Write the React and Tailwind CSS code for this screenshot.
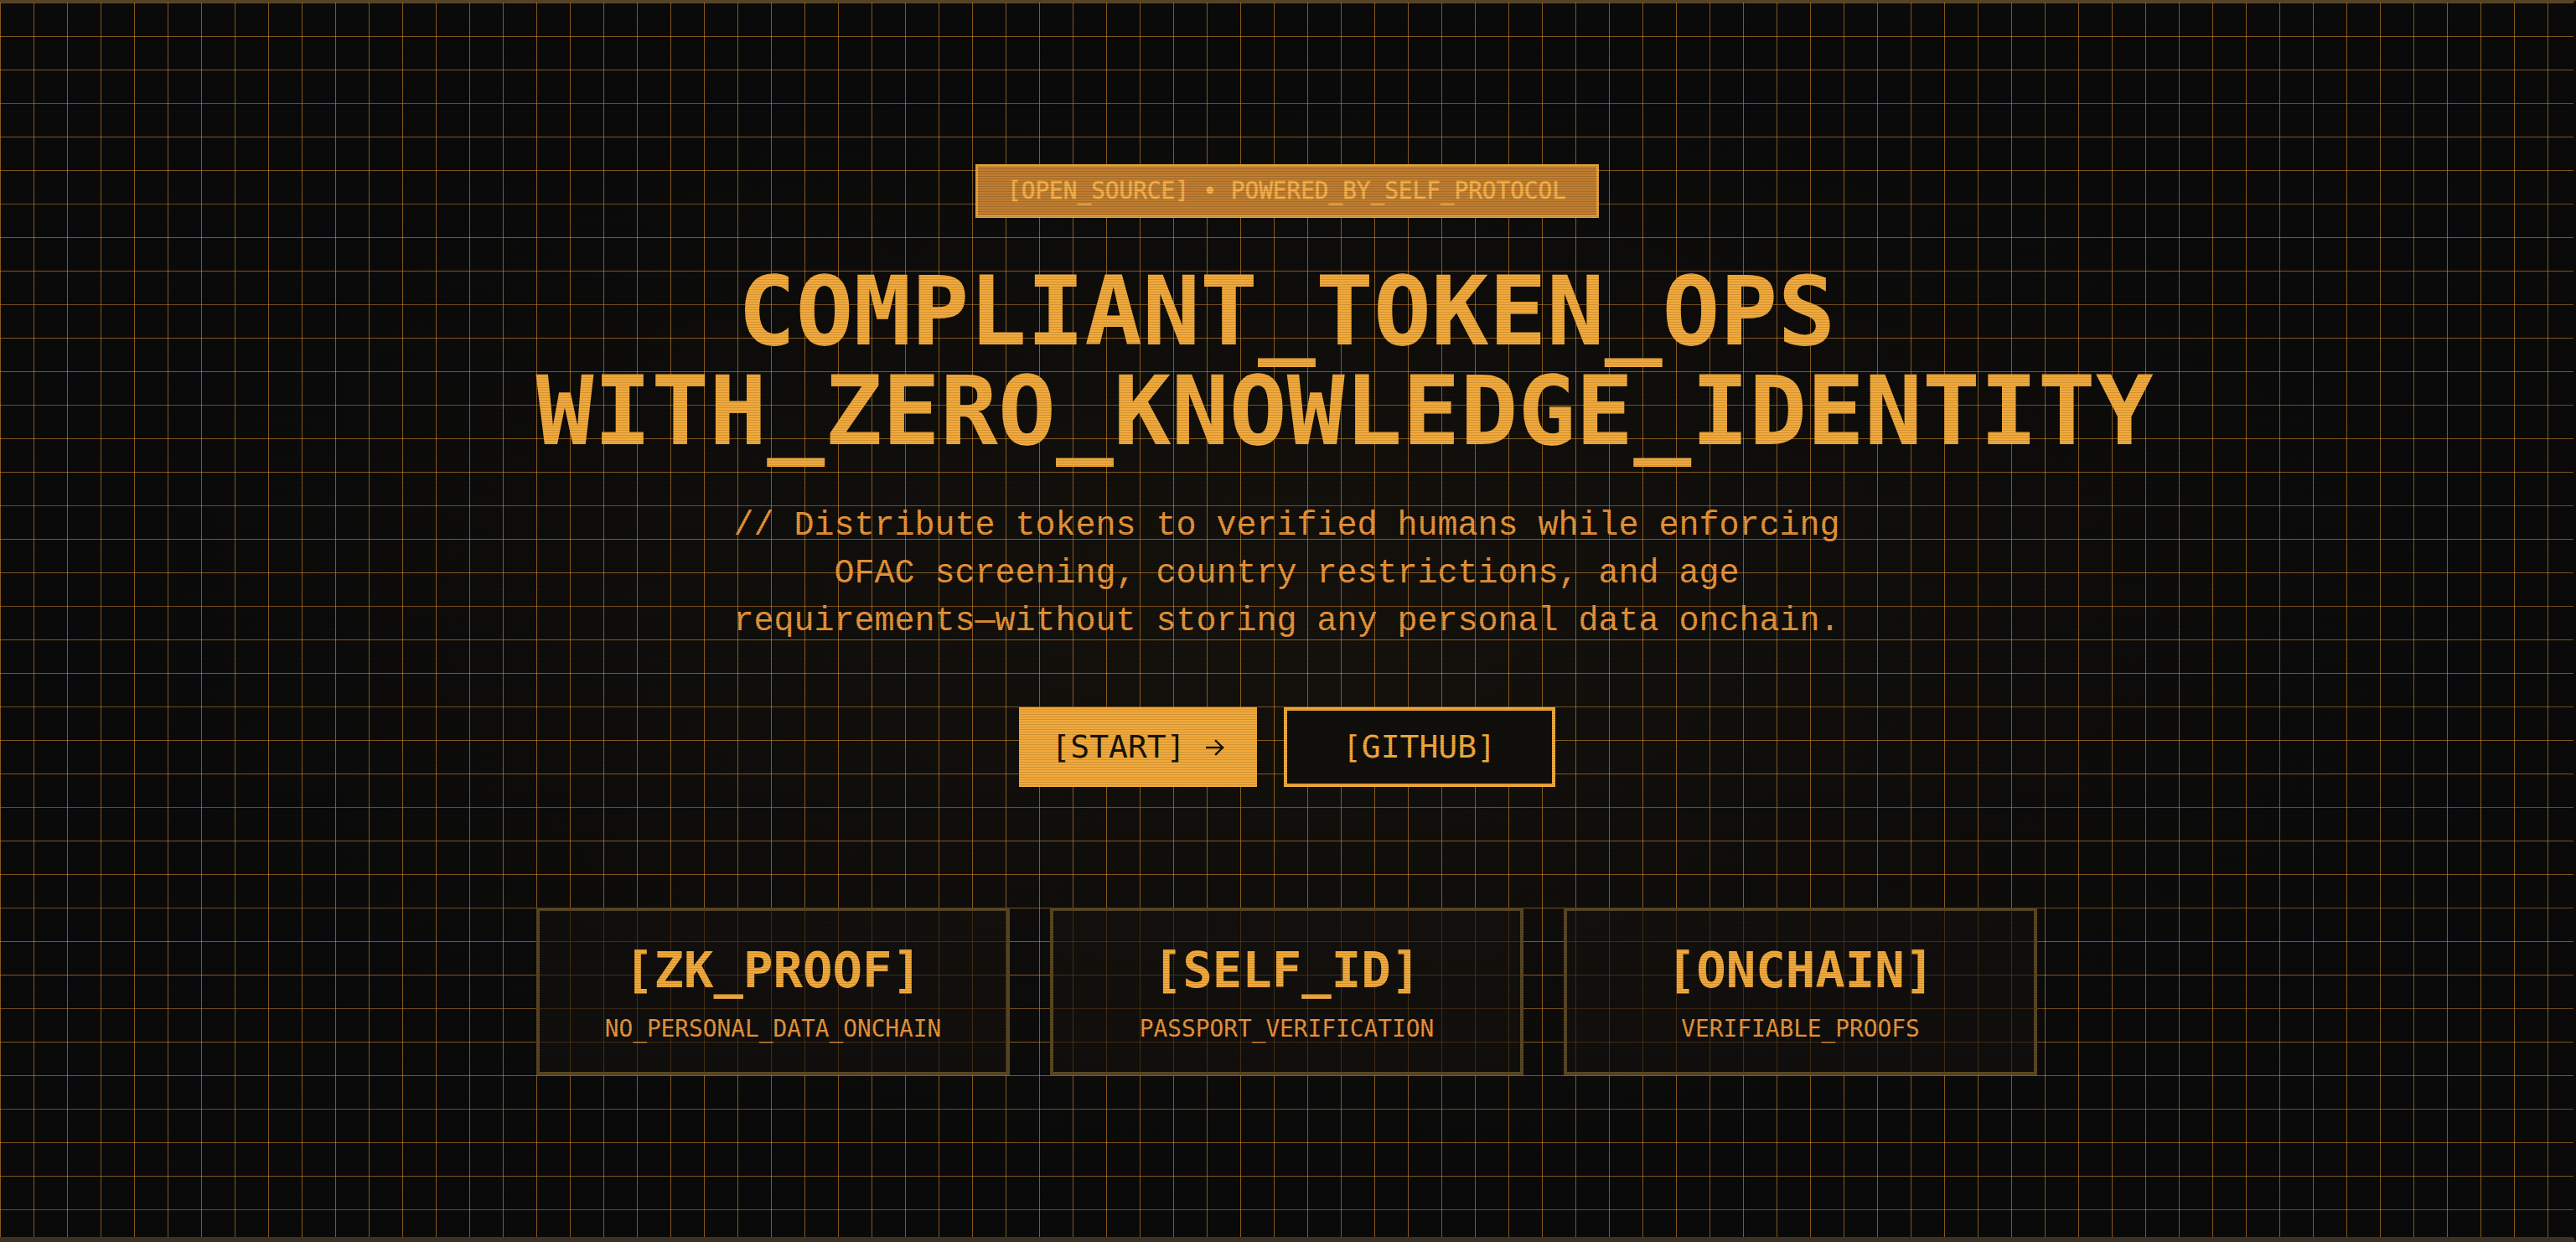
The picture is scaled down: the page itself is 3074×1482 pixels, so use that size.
import React from "react";

const MONO = "font-['DejaVu_Sans_Mono','Liberation_Mono',monospace]";

function Card({ title, sub }) {
  return (
    <div className="flex h-[200px] w-[565px] flex-col items-center border-4 border-[#5a4723] bg-[#16130f]/60 pt-[41px]">
      <div className={`${MONO} text-[59px] font-bold leading-[59px] text-[#f2aa3c]`}>{title}</div>
      <div className={`${MONO} mt-[27px] text-[27.8px] leading-[28px] text-[#e8953a]`}>{sub}</div>
    </div>
  );
}

export default function App() {
  return (
    <div className="relative h-screen w-full overflow-hidden border-t-[3px] border-b-[6px] border-r-[3px] border-t-[#52432a] border-b-[#3a3222] border-r-[#0a0a0a] bg-[#0a0a0a] bg-[linear-gradient(to_right,rgba(242,160,50,0.55)_1px,transparent_1px),linear-gradient(to_bottom,rgba(242,160,50,0.5)_1px,transparent_1px),radial-gradient(ellipse_at_center,rgba(242,170,60,0.05),transparent_65%)] bg-[size:40px_40px,40px_40px,100%_100%]">
      <div className="relative z-0 flex flex-col items-center pt-[193px]">
        <div className={`${MONO} flex h-[64px] w-[744px] items-center justify-center whitespace-nowrap border-[3px] border-[#e8a33c] bg-[#bf7d30] text-[27.7px] text-[#f6b24a] [-webkit-text-stroke:0.5px_#f6b24a]`}>
          [OPEN_SOURCE] • POWERED_BY_SELF_PROTOCOL
        </div>

        <h1 className={`${MONO} mt-[52px] w-[1792px] text-center text-[114.5px] font-bold leading-[119px] text-[#f2aa3c]`}>
          <div className="whitespace-nowrap">COMPLIANT_TOKEN_OPS</div>
          <div>WITH_ZERO_KNOWLEDGE_IDENTITY</div>
        </h1>

        <p className="mt-[49px] w-[1360px] text-center font-['Liberation_Mono',monospace] text-[40px] leading-[57px] text-[#e8953a]">
          // Distribute tokens to verified humans while enforcing OFAC screening, country restrictions, and age requirements—without storing any personal data onchain.
        </p>

        <div className="mt-[74px] flex gap-[32px]">
          <button className={`${MONO} flex h-[95px] w-[284px] items-center justify-center gap-[24px] bg-[#f2aa3c] text-[38px] text-[#1a1309]`}>
            <span>[START]</span>
            <svg width="22" height="20" viewBox="0 0 22 20" fill="none" stroke="#1a1309" strokeWidth="2.4" strokeLinecap="square">
              <path d="M1 10H20" />
              <path d="M12 2L20 10L12 18" />
            </svg>
          </button>
          <button className={`${MONO} flex h-[95px] w-[324px] items-center justify-center border-4 border-[#f2aa3c] bg-[#110f0c] text-[38px] text-[#f2aa3c]`}>
            [GITHUB]
          </button>
        </div>

        <div className="mt-[144px] flex gap-[48px]">
          <Card title="[ZK_PROOF]" sub="NO_PERSONAL_DATA_ONCHAIN" />
          <Card title="[SELF_ID]" sub="PASSPORT_VERIFICATION" />
          <Card title="[ONCHAIN]" sub="VERIFIABLE_PROOFS" />
        </div>
      </div>

      <div className="pointer-events-none absolute inset-0 z-10 bg-[repeating-linear-gradient(to_bottom,rgba(0,0,0,0.14)_0px,rgba(0,0,0,0.14)_1px,transparent_1px,transparent_3px)]" />
    </div>
  );
}
